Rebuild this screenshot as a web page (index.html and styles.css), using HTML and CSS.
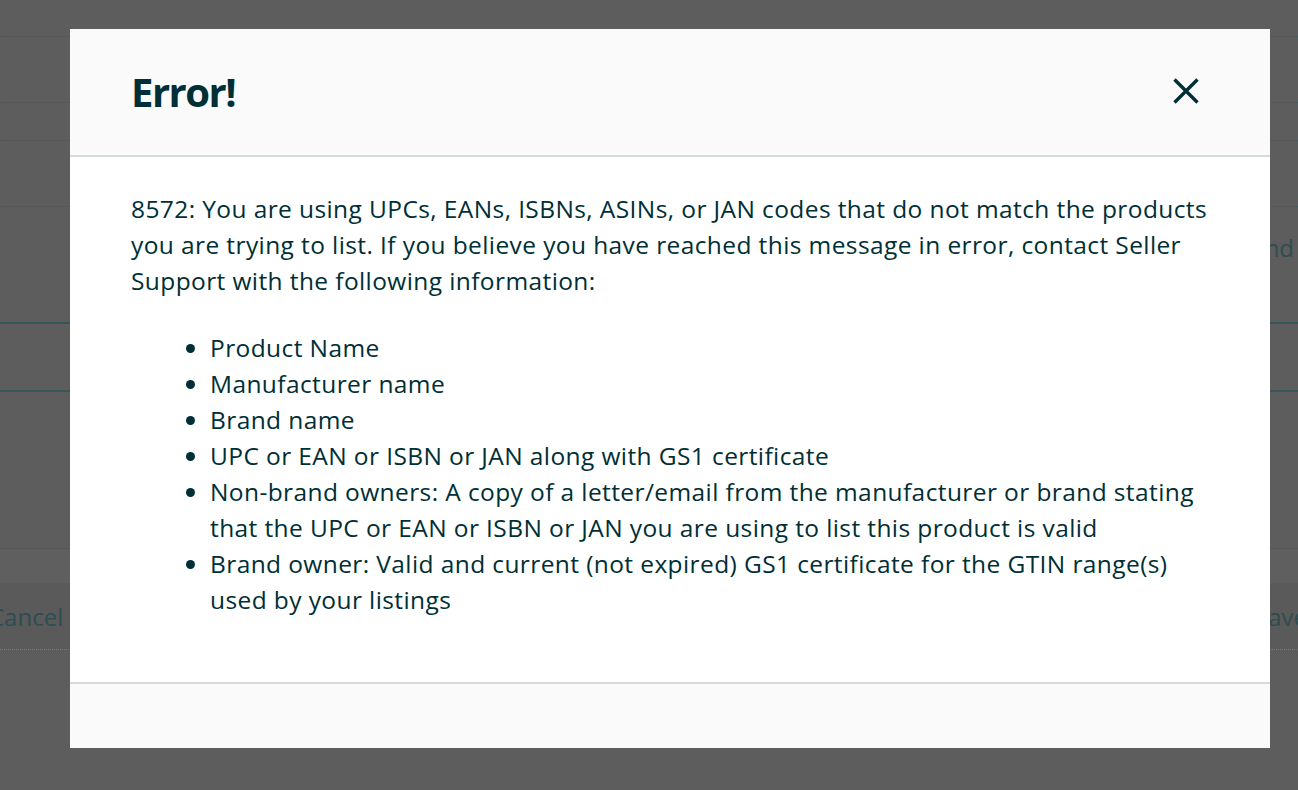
FILE: index.html
```html
<!DOCTYPE html>
<html lang="en">
<head>
    <meta charset="UTF-8">
    <meta name="viewport" content="width=device-width, initial-scale=1.0">
    <title>Error</title>
    <link rel="stylesheet" href="styles.css">
</head>
<body>
    <!-- page behind the dialog, already dimmed -->
    <div class="page">
        <div class="row row-a"></div>
        <div class="row row-b"></div>
        <div class="row row-c"></div>
        <div class="row row-d"></div>
        <div class="row row-e"><span class="col-label">Brand</span></div>
        <div class="row row-f"></div>
        <div class="page-foot">
            <div class="foot-top"></div>
            <div class="foot-actions">
                <span class="btn-cancel">Cancel</span>
                <span class="btn-save">Save</span>
            </div>
        </div>
    </div>

    <div class="modal">
        <div class="modal-header">
            <h2 class="modal-title">Error!</h2>
            <span class="modal-close" aria-label="Close">
                <svg width="28" height="28" viewBox="0 0 28 28">
                    <path d="M2.5 2.5 L25.5 25.5 M25.5 2.5 L2.5 25.5" stroke="#002f36" stroke-width="3.4" fill="none"/>
                </svg>
            </span>
        </div>
        <div class="modal-body">
            <p class="message">8572: You are using UPCs, EANs, ISBNs, ASINs, or JAN codes that do not match the products you are trying to list. If you believe you have reached this message in error, contact Seller Support with the following information:</p>
            <ul class="info-list">
                <li>Product Name</li>
                <li>Manufacturer name</li>
                <li>Brand name</li>
                <li>UPC or EAN or ISBN or JAN along with GS1 certificate</li>
                <li>Non-brand owners: A copy of a letter/email from the manufacturer or brand stating that the UPC or EAN or ISBN or JAN you are using to list this product is valid</li>
                <li>Brand owner: Valid and current (not expired) GS1 certificate for the GTIN range(s) used by your listings</li>
            </ul>
        </div>
        <div class="modal-footer"></div>
    </div>
</body>
</html>
```

FILE: styles.css
```css
body {
    margin: 0;
    height: 790px;
    overflow: hidden;
    background-color: #5d5d5d;
    font-family: "Open Sans", "Noto Sans", Arial, sans-serif;
    color: #002f36;
}

.page {
    display: flex;
    flex-direction: column;
}

.row {
    border-bottom: 1px dotted #3e5a5e;
    box-sizing: border-box;
}

.row-a { height: 37px; }
.row-b { height: 66px; }
.row-c { height: 38px; }
.row-d { height: 66px; }

.row-e {
    height: 117px;
    border-bottom: 2px solid #35575c;
    padding-left: 1226px;
    padding-top: 24px;
    font-size: 24px;
    color: #2f4c51;
    white-space: nowrap;
    overflow: hidden;
}

.row-f {
    height: 68px;
    border-bottom: 2px solid #35575c;
}

.page-foot {
    margin-top: 156px;
    border-top: 1px solid #565656;
}

.foot-top {
    height: 34px;
    background-color: #5f5f5f;
}

.foot-actions {
    height: 66px;
    background-color: #5a5a5a;
    border-bottom: 1px dotted #7a7a7a;
    display: flex;
    justify-content: space-between;
    align-items: center;
    font-size: 24px;
    color: #2f4c51;
    margin: 0 -9px 0 -11px;
}

.modal {
    position: fixed;
    top: 29px;
    left: 70px;
    width: 1200px;
    height: 719px;
    background: #fff;
    display: flex;
    flex-direction: column;
}

.modal-header {
    height: 128px;
    flex: none;
    box-sizing: border-box;
    background-color: #fafafa;
    border-bottom: 2px solid #d5dbdb;
    display: flex;
    align-items: center;
    justify-content: space-between;
    padding: 0 70px 2px 61px;
}

.modal-title {
    margin: 0;
    font-size: 40px;
    font-weight: 700;
    letter-spacing: -1.5px;
}

.modal-close {
    display: flex;
    cursor: pointer;
}

.modal-body {
    flex: 1;
    padding: 34px 50px 0 61px;
    font-size: 24.5px;
    letter-spacing: 0.4px;
    line-height: 36px;
}

.message {
    margin: 0 0 31px 0;
}

.info-list {
    margin: 0;
    padding-left: 79px;
}

.modal-footer {
    height: 64px;
    flex: none;
    background-color: #fafafa;
    border-top: 2px solid #d5dbdb;
}
```
